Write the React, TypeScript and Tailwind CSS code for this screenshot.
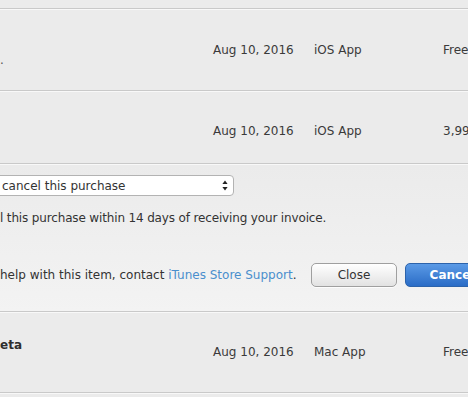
import { ReactNode } from "react";

function Divider() {
  return (
    <div>
      <div className="h-px bg-[#c9c9c9]" />
      <div className="h-px bg-[#f8f8f8]" />
    </div>
  );
}

function PurchaseRow({
  title,
  subtitle,
  date,
  kind,
  price,
  height,
  top,
}: {
  title?: ReactNode;
  subtitle?: ReactNode;
  date: string;
  kind: string;
  price: string;
  height: string;
  top: string;
}) {
  return (
    <div className={`grid grid-cols-[213px_101px_129px_1fr] ${height}`}>
      <div className="flex flex-col pt-[23px] leading-[18px]">
        <span className="h-[18px] font-bold text-[#2e2e2e]">{title}</span>
        <span className="h-[18px] text-[#555]">{subtitle}</span>
      </div>
      <div className={top}>{date}</div>
      <div className={top}>{kind}</div>
      <div className={`${top} whitespace-nowrap`}>{price}</div>
    </div>
  );
}

function SelectArrows() {
  return (
    <svg width="6" height="11" viewBox="0 0 6 11" className="shrink-0">
      <path d="M3 0.5 L5.6 4 H0.4 Z" fill="#222" />
      <path d="M3 10.5 L5.6 7 H0.4 Z" fill="#222" />
    </svg>
  );
}

export default function App() {
  return (
    <div className="w-[468px] h-[397px] overflow-hidden bg-[#ebebeb] text-[12px] leading-4 text-[#3a3a3a] font-['DejaVu_Sans',sans-serif]">
      <div className="w-[520px]">
        <div className="h-[8px]" />
        <Divider />

        <PurchaseRow
          height="h-[80px]"
          top="pt-[32px]"
          title=""
          subtitle="."
          date="Aug 10, 2016"
          kind="iOS App"
          price="Free"
        />
        <Divider />

        <PurchaseRow
          height="h-[71px]"
          top="pt-[31px]"
          date="Aug 10, 2016"
          kind="iOS App"
          price="3,99 €"
        />
        <Divider />

        {/* Report a problem panel */}
        <div className="h-[146px] bg-gradient-to-b from-[#ebebeb] to-[#f3f3f3] pt-[10px] text-[#333]">
          <div className="-ml-[10px] w-[244px] h-[21px] flex items-center justify-between bg-white border border-[#b3b3b3] rounded-[4px] pl-[11px] pr-[5px] shadow-[inset_0_1px_0_#fff]">
            <span>cancel this purchase</span>
            <SelectArrows />
          </div>

          <p className="mt-[14px] tracking-[-0.15px]">
            l this purchase within 14 days of receiving your invoice.
          </p>

          <div className="mt-[37px] flex items-center">
            <p className="w-[311px] whitespace-nowrap">
              help with this item, contact{" "}
              <span className="text-[#4a8fcd]">iTunes Store Support</span>.
            </p>
            <button className="w-[86px] h-[24px] rounded-[5px] border border-[#9f9f9f] bg-gradient-to-b from-[#ffffff] to-[#e2e2e2] text-[#333] shadow-[0_1px_0_rgba(255,255,255,0.8)]">
              Close
            </button>
            <button className="ml-[8px] w-[94px] h-[24px] rounded-[5px] border border-[#2c63ab] bg-gradient-to-b from-[#5a9ae6] to-[#2a6cc6] text-white font-bold">
              Cancel
            </button>
          </div>
        </div>
        <Divider />

        <PurchaseRow
          height="h-[79px]"
          top="pt-[31px]"
          title="eta"
          subtitle=""
          date="Aug 10, 2016"
          kind="Mac App"
          price="Free"
        />
        <Divider />
      </div>
    </div>
  );
}
